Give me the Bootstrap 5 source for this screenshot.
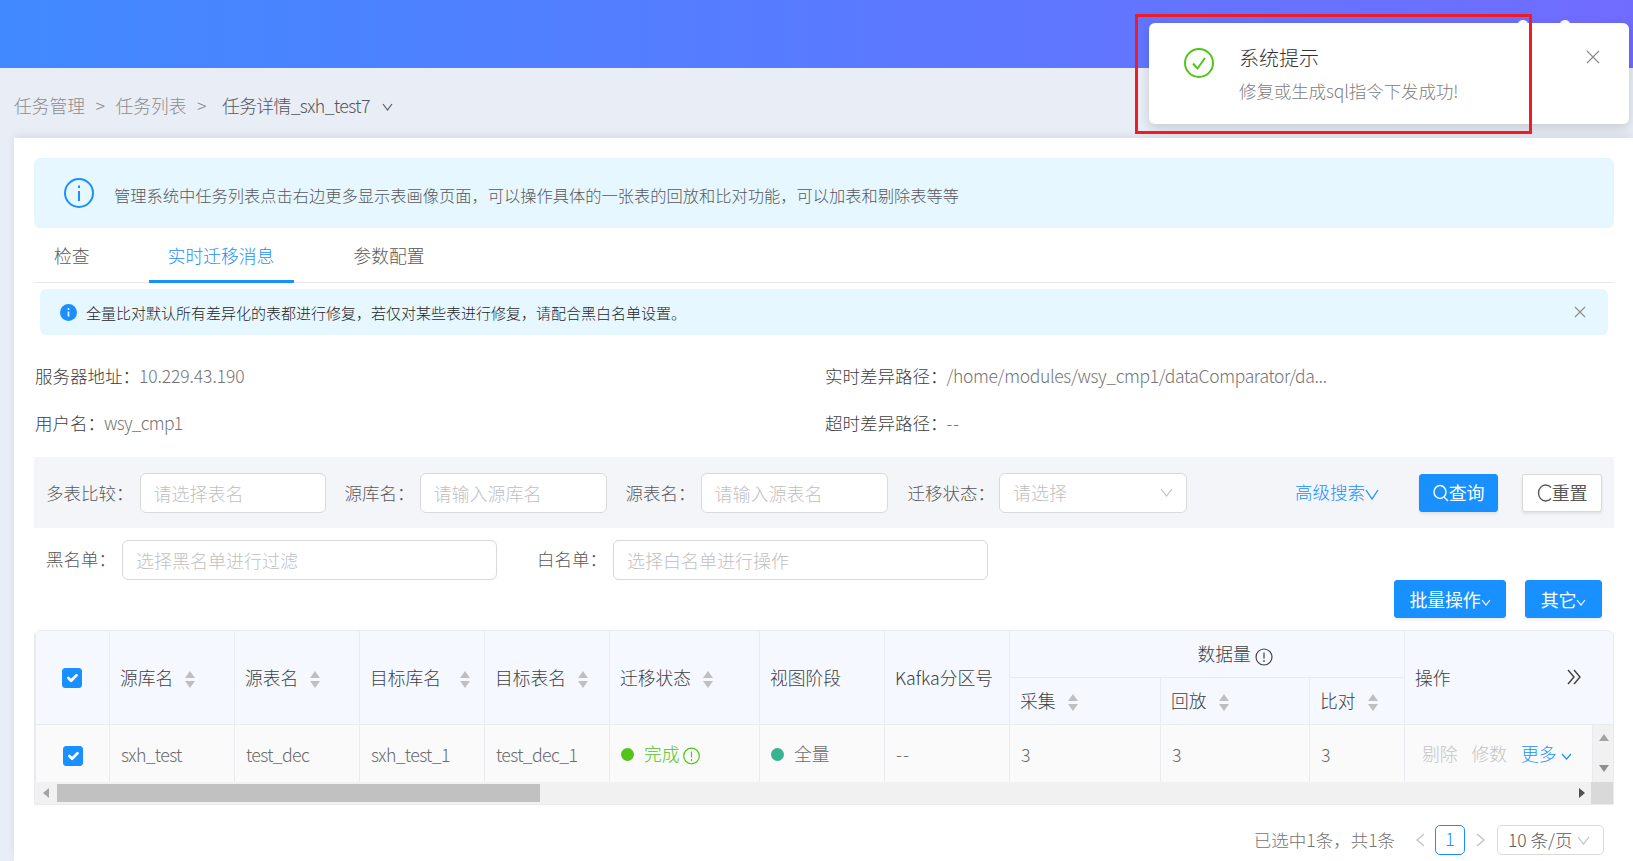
<!doctype html>
<html lang="zh-CN">
<head>
  <meta charset="utf-8">
  <meta name="viewport" content="width=device-width, initial-scale=1">
  <title>任务详情</title>
  <link href="https://cdn.jsdelivr.net/npm/bootstrap@5.3.0/dist/css/bootstrap.min.css" rel="stylesheet">
  <style>
    /* Page */
    body {
      background: #e9edf5;
      font-family: "Noto Sans CJK SC", "Liberation Sans", sans-serif;
      font-weight: 300;
      font-size: 17.5px;
      color: #595959;
      height: 861px;
      overflow: hidden;
      position: relative;
    }
    .top-bar {
      height: 68px;
      background: linear-gradient(90deg, #4189ff, #706cff);
    }
    .crumbs {
      height: 70px;
      padding: 25px 14px 0;
      line-height: 24px;
      font-size: 17.75px;
      color: #8c8c8c;
    }
    .crumbs .sep { margin: 0 10.5px; }
    .crumbs .here { color: #555; margin-left: 5px; letter-spacing: -.6px; }
    .crumb-chev { margin: 10px 0 0 12px; }
    /* Main card */
    .main-panel {
      margin-left: 14px;
      background: #fff;
      padding: 20px 19px 0 20px;
      height: 723px;
      box-shadow: 0 -3px 8px rgba(0, 0, 0, .07);
    }
    .tip-box {
      height: 70px;
      background: #e6f7ff;
      border-radius: 6px;
      padding: 0 30px;
      font-size: 16.25px;
      color: #595959;
    }
    .tip-box span { margin-top: 4px; margin-left: -2px; }
    .tab-row {
      height: 55px;
      border-bottom: 1px solid #e8e8e8;
      font-size: 17.75px;
    }
    .tab-item {
      height: 55px;
      line-height: 54px;
      color: #595959;
    }
    .tab-item.on {
      color: #1890ff;
      border-bottom: 3px solid #1890ff;
      width: 145px;
      text-align: center;
      margin-left: 59px;
    }
    .tab-first { margin-left: 20px; }
    .tab-last { margin-left: 60px; }
    .note-box {
      margin: 6px 6px 0 6px;
      height: 46px;
      background: #e6f7ff;
      border-radius: 6px;
      padding: 0 22px 0 20px;
      font-size: 15px;
      color: #262626;
    }
    .note-box .txt { margin-left: 9px; margin-top: 2px; }
    .info-grid { padding-top: 23px; height: 122px; }
    .info-line { height: 47px; line-height: 36px; }
    .info-l { width: 791px; padding-left: 1px; }
    .info-key { color: #404040; }
    .info-val { color: #737373; margin-left: -1px; }
    .val-path { letter-spacing: -.34px; }
    .val-user { letter-spacing: -.7px; }
    .val-ip { letter-spacing: -.1px; }
    .val-dash { letter-spacing: 1px; }
    /* Search */
    .search-bar {
      height: 71px;
      background: #f3f5f9;
      padding: 0 12px;
    }
    .search-bar .field-label { margin-top: 2px; }
    .filter-row .field-label { margin-top: -2px; }
    .field-label { color: #595959; white-space: nowrap; flex-shrink: 0; }
    .field-box {
      height: 40px;
      border: 1px solid #d9d9d9;
      border-radius: 6px;
      background: #fff;
      color: #bfbfbf;
      font-size: 18px;
      font-weight: 300;
      padding: 0 13px;
      box-shadow: none;
      flex-shrink: 0;
    }
    .field-box::placeholder { color: #bfbfbf; }
    .w-a { width: 186px; margin: 0 19px 0 6px; }
    .w-b { width: 187px; margin: 0 19px 0 5px; }
    .w-c { width: 187px; margin: 0 20px 0 5px; }
    .w-d { width: 188px; margin-left: 4px; }
    .w-e { width: 375px; margin: 0 40px 0 6px; }
    .w-f { width: 375px; margin-left: 6px; }
    .adv-link { color: #1890ff; margin-left: 108px; margin-right: 40px; text-decoration: none; white-space: nowrap; flex-shrink: 0; }
    .adv-link svg { vertical-align: -1px; }
    .act-btn {
      height: 38px;
      width: 79px;
      padding: 0;
      font-size: 18px;
      font-weight: 400;
      border-radius: 3px;
      white-space: nowrap;
      flex-shrink: 0;
      letter-spacing: -.2px;
      box-shadow: 0 2px 3px rgba(0, 0, 0, .08);
    }
    .act-btn svg { vertical-align: -2px; }
    .act-btn svg.chev { vertical-align: 1px; }
    .act-btn.btn-primary { background: #1890ff; border-color: #1890ff; }
    .act-btn.btn-light { background: #fff; border-color: #d9d9d9; color: #595959; margin-left: 24px; width: 80px; }
    .act-btn.wide-a { width: 112px; }
    .act-btn.wide-b { width: 77px; margin-left: 19px; }
    .filter-row { padding: 12px 12px 0; height: 52px; }
    .bulk-row { height: 50px; padding: 0 12px 0 0; }
    /* Table */
    .grid-wrap {
      border: 1px solid #e8ebf0;
      border-radius: 6px 6px 0 0;
      overflow: hidden;
      width: 1580px;
    }
    .grid {
      table-layout: fixed;
      width: 1579px;
      margin: 0;
      border-collapse: collapse;
      color: #595959;
    }
    .grid th, .grid td {
      border: 1px solid #e8ebf0;
      border-top: 0;
      padding: 0 0 0 10px;
      vertical-align: middle;
      font-weight: 300;
      white-space: nowrap;
      overflow: hidden;
    }
    .grid th { background: #f5f8ff; color: #404040; font-size: 17.75px; }
    .grid td { background: #fafafa; height: 58px; color: #6b6b6b; border-bottom: 0; padding-left: 11px; font-size: 17.75px; }
    .grid td.latin { letter-spacing: -.65px; padding-top: 2px; }
    .grid td.dash { letter-spacing: 1px; }
    .grid .top-h { height: 46px; text-align: center; padding-left: 56px; }
    .grid .sub-h { height: 47px; }
    .grid .chk { padding: 0; text-align: center; }
    .grid th.chk { padding: 0 1px 4px 0; }
    .grid .op {
      position: relative;
      box-shadow: -3px 0 6px rgba(0, 0, 0, .08);
      border-left: 0;
      clip-path: inset(0 0 0 -10px);
    }
    .grid td.op { padding-left: 17px; }
    .grid td.bar-v { padding: 0; background: #f1f1f1; border: 0; }
    .grid .form-check-input {
      width: 20px;
      height: 20px;
      margin: 0;
      float: none;
      background-color: #1890ff;
      border-color: #1890ff;
      border-radius: 3px;
      display: inline-block;
      vertical-align: middle;
    }
    .endgap { padding-right: 33px; }
    .sorter { display: inline-block; margin-left: 12px; vertical-align: -3px; }
    .sorter.far { margin-left: 19px; }
    .dot { display: inline-block; width: 13px; height: 13px; border-radius: 50%; margin-right: 10px; }
    .dot-green { background: #52c41a; }
    .dot-teal { background: #36b38f; }
    .done-txt { color: #52c41a; }
    .muted-op { color: #c4c4c4; margin-right: 14px; }
    .more-op { color: #1890ff; }
    .bar-h { height: 22px; background: #f1f1f1; }
    .bar-thumb { width: 484px; height: 18px; background: #c1c1c1; }
    .bar-left { width: 22px; }
    .bar-fill { width: 1034px; }
    .bar-right { width: 19px; }
    .bar-corner { width: 22px; height: 22px; background: #d9d9d9; }
    /* Pager */
    .pager-row { padding: 20px 10px 0 0; line-height: 30px; color: #737373; }
    .pager-num {
      width: 30px;
      height: 30px;
      border: 1px solid #1890ff;
      border-radius: 5px;
      color: #1890ff;
      text-align: center;
      line-height: 26px;
      margin: 0 11px 0 10px;
    }
    .pager-size {
      width: 107px;
      height: 30px;
      border: 1px solid #d9d9d9;
      border-radius: 5px;
      padding-left: 10px;
      margin-left: 11px;
      line-height: 28px;
      color: #595959;
    }
    /* Notification */
    .notice {
      position: absolute;
      left: 1149px;
      top: 23px;
      width: 480px;
      height: 101px;
      background: #fff;
      border: 0;
      border-radius: 6px;
      font-size: 17.5px;
      box-shadow: 0 4px 12px rgba(0, 0, 0, .15);
      z-index: 10;
    }
    .notice-title { position: absolute; left: 90px; top: 22px; color: #333; line-height: 26px; font-size: 20px; }
    .notice-text { position: absolute; left: 90px; top: 56px; font-size: 17.5px; color: #808080; line-height: 24px; letter-spacing: -.1px; }
    .notice-icon { position: absolute; left: 35px; top: 25px; }
    .notice-close { position: absolute; left: 437px; top: 27px; }
    .red-frame {
      position: absolute;
      left: 1135px;
      top: 14px;
      width: 397px;
      height: 120px;
      border: 3px solid #ef1c25;
      z-index: 11;
    }
    .hdr-bump {
      position: absolute;
      top: 20px;
      width: 10px;
      height: 8px;
      border-radius: 50%;
      background: #fff;
    }
    .bump-a { left: 1518px; }
    .bump-b { left: 1560px; }
  </style>
</head>
<body>
  <div class="top-bar"></div>
  <span class="hdr-bump bump-a"></span>
  <span class="hdr-bump bump-b"></span>

  <!-- Breadcrumb -->
  <div class="crumbs d-flex align-items-start">
    <span>任务管理</span>
    <span class="sep">&gt;</span>
    <span>任务列表</span>
    <span class="sep">&gt;</span>
    <span class="here">任务详情_sxh_test7</span>
    <svg class="crumb-chev" width="11" height="8" viewBox="0 0 11 8" fill="none" stroke="#595959" stroke-width="1.1"><path d="M1 1l4.500 6L10 1"/></svg>
  </div>

  <div class="main-panel">
    <div class="tip-box d-flex align-items-center">
      <svg width="30" height="30" viewBox="0 0 30 30" fill="none" stroke="#1890ff" stroke-width="2"><circle cx="15" cy="15" r="14"/><path d="M15 13v10M15 7.500v2.500"/></svg>
      <span class="ms-3 ps-1">管理系统中任务列表点击右边更多显示表画像页面，可以操作具体的一张表的回放和比对功能，可以加表和剔除表等等</span>
    </div>

    <div class="tab-row d-flex">
      <div class="tab-item tab-first">检查</div>
      <div class="tab-item on">实时迁移消息</div>
      <div class="tab-item tab-last">参数配置</div>
    </div>

    <div class="note-box d-flex align-items-center justify-content-between">
      <div class="d-flex align-items-center">
        <svg width="17" height="17" viewBox="0 0 17 17"><circle cx="8.500" cy="8.500" r="8.500" fill="#1890ff"/><path d="M8.500 7.500v5M8.500 4v2" stroke="#fff" stroke-width="1.600"/></svg>
        <span class="txt">全量比对默认所有差异化的表都进行修复，若仅对某些表进行修复，请配合黑白名单设置。</span>
      </div>
      <svg width="12" height="12" viewBox="0 0 12 12" fill="none" stroke="#8c8c8c" stroke-width="1.100"><path d="M1 1l10 10M11 1L1 11"/></svg>
    </div>

    <div class="info-grid">
      <div class="info-line d-flex">
        <div class="info-l"><span class="info-key">服务器地址：</span><span class="info-val val-ip">10.229.43.190</span></div>
        <div><span class="info-key">实时差异路径：</span><span class="info-val val-path">/home/modules/wsy_cmp1/dataComparator/da...</span></div>
      </div>
      <div class="info-line d-flex">
        <div class="info-l"><span class="info-key">用户名：</span><span class="info-val val-user">wsy_cmp1</span></div>
        <div><span class="info-key">超时差异路径：</span><span class="info-val val-dash">--</span></div>
      </div>
    </div>

    <!-- Search -->
    <div class="search-bar d-flex align-items-center">
      <span class="field-label">多表比较：</span>
      <input class="form-control field-box w-a" placeholder="请选择表名">
      <span class="field-label">源库名：</span>
      <input class="form-control field-box w-b" placeholder="请输入源库名">
      <span class="field-label">源表名：</span>
      <input class="form-control field-box w-c" placeholder="请输入源表名">
      <span class="field-label">迁移状态：</span>
      <div class="field-box w-d d-flex align-items-center justify-content-between">
        <span>请选择</span>
        <svg width="13" height="9" viewBox="0 0 13 9" fill="none" stroke="#bfbfbf" stroke-width="1.100"><path d="M1 1l5.500 7L12 1"/></svg>
      </div>
      <a class="adv-link" href="#">高级搜索<svg width="14" height="11" viewBox="0 0 14 11" fill="none" stroke="#1890ff" stroke-width="1.300"><path d="M1 1l6 9 6-9"/></svg></a>
      <button class="btn btn-primary act-btn" type="button"><svg width="16" height="18" viewBox="0 0 16 18" fill="none" stroke="#fff" stroke-width="1.400"><ellipse cx="7" cy="8" rx="6" ry="6.500"/><path d="M11 13l4 4"/></svg>查询</button>
      <button class="btn btn-light act-btn" type="button"><svg width="15" height="18" viewBox="0 0 15 18" fill="none" stroke="#595959" stroke-width="1.400"><path d="M14 3.500C12.800 2 10.800 1 8.500 1 4.600 1 1.500 4.600 1.500 9s3.100 8 7 8c2.300 0 4.300-1 5.500-2.500"/></svg>重置</button>
    </div>

    <div class="filter-row d-flex align-items-center">
      <span class="field-label">黑名单：</span>
      <input class="form-control field-box w-e" placeholder="选择黑名单进行过滤">
      <span class="field-label">白名单：</span>
      <input class="form-control field-box w-f" placeholder="选择白名单进行操作">
    </div>

    <div class="bulk-row d-flex justify-content-end">
      <button class="btn btn-primary act-btn wide-a" type="button">批量操作<svg class="chev" width="10" height="7" viewBox="0 0 10 7" fill="none" stroke="#fff" stroke-width="1.200"><path d="M1 1l4 5 4-5"/></svg></button>
      <button class="btn btn-primary act-btn wide-b" type="button">其它<svg class="chev" width="10" height="7" viewBox="0 0 10 7" fill="none" stroke="#fff" stroke-width="1.200"><path d="M1 1l4 5 4-5"/></svg></button>
    </div>

    <!-- Table -->
    <div class="grid-wrap">
      <table class="table grid">
        <colgroup>
          <col style="width:74px"><col style="width:125px"><col style="width:125px"><col style="width:125px"><col style="width:125px">
          <col style="width:150px"><col style="width:125px"><col style="width:125px"><col style="width:151px"><col style="width:149px">
          <col style="width:95px"><col style="width:188px"><col style="width:22px">
        </colgroup>
        <thead>
          <tr>
            <th rowspan="2" class="chk"><input class="form-check-input" type="checkbox" checked aria-label="全选"></th>
            <th rowspan="2">源库名<svg class="sorter" width="10" height="17" viewBox="0 0 10 17" fill="#bfbfbf"><path d="M5 0l5 7H0zM5 17l5-7H0z"/></svg></th>
            <th rowspan="2">源表名<svg class="sorter" width="10" height="17" viewBox="0 0 10 17" fill="#bfbfbf"><path d="M5 0l5 7H0zM5 17l5-7H0z"/></svg></th>
            <th rowspan="2">目标库名<svg class="sorter far" width="10" height="17" viewBox="0 0 10 17" fill="#bfbfbf"><path d="M5 0l5 7H0zM5 17l5-7H0z"/></svg></th>
            <th rowspan="2">目标表名<svg class="sorter" width="10" height="17" viewBox="0 0 10 17" fill="#bfbfbf"><path d="M5 0l5 7H0zM5 17l5-7H0z"/></svg></th>
            <th rowspan="2">迁移状态<svg class="sorter" width="10" height="17" viewBox="0 0 10 17" fill="#bfbfbf"><path d="M5 0l5 7H0zM5 17l5-7H0z"/></svg></th>
            <th rowspan="2">视图阶段</th>
            <th rowspan="2">Kafka分区号</th>
            <th colspan="3" class="top-h">数据量 <svg width="18" height="18" viewBox="0 0 18 18" fill="none" stroke="#404040" stroke-width="1.200" class="align-middle"><circle cx="9" cy="9" r="8"/><path d="M9 4.500v6M9 12v2"/></svg></th>
            <th rowspan="2" colspan="2" class="op">
              <div class="d-flex justify-content-between align-items-center endgap">
                <span>操作</span>
                <svg width="14" height="16" viewBox="0 0 14 16" fill="none" stroke="#404040" stroke-width="1.400"><path d="M1 1l6 7-6 7M7 1l6 7-6 7"/></svg>
              </div>
            </th>
          </tr>
          <tr>
            <th class="sub-h">采集<svg class="sorter" width="10" height="17" viewBox="0 0 10 17" fill="#bfbfbf"><path d="M5 0l5 7H0zM5 17l5-7H0z"/></svg></th>
            <th class="sub-h">回放<svg class="sorter" width="10" height="17" viewBox="0 0 10 17" fill="#bfbfbf"><path d="M5 0l5 7H0zM5 17l5-7H0z"/></svg></th>
            <th class="sub-h">比对<svg class="sorter" width="10" height="17" viewBox="0 0 10 17" fill="#bfbfbf"><path d="M5 0l5 7H0zM5 17l5-7H0z"/></svg></th>
          </tr>
        </thead>
        <tbody>
          <tr>
            <td class="chk"><input class="form-check-input" type="checkbox" checked aria-label="选择"></td>
            <td class="latin">sxh_test</td>
            <td class="latin">test_dec</td>
            <td class="latin">sxh_test_1</td>
            <td class="latin">test_dec_1</td>
            <td><span class="dot dot-green"></span><span class="done-txt">完成</span> <svg width="17" height="18" viewBox="0 0 17 18" fill="none" stroke="#52c41a" stroke-width="1.200" class="align-middle"><circle cx="8.500" cy="9" r="7.800"/><path d="M8.500 4.500v6M8.500 12v2"/></svg></td>
            <td><span class="dot dot-teal"></span>全量</td>
            <td class="dash">--</td>
            <td class="latin">3</td>
            <td class="latin">3</td>
            <td class="latin">3</td>
            <td class="op"><span class="muted-op">剔除</span><span class="muted-op">修数</span><span class="more-op">更多<svg width="11" height="7" viewBox="0 0 11 7" fill="none" stroke="#1890ff" stroke-width="1.200" class="ms-1"><path d="M1 1l4.500 5L10 1"/></svg></span></td>
            <td class="bar-v">
              <div class="d-flex flex-column align-items-center justify-content-between py-2">
                <svg width="10" height="7" viewBox="0 0 10 7" fill="#a3a3a3"><path d="M5 0l5 7H0z"/></svg>
                <svg class="mt-4" width="10" height="7" viewBox="0 0 10 7" fill="#8f8f8f"><path d="M5 7l5-7H0z"/></svg>
              </div>
            </td>
          </tr>
        </tbody>
      </table>
      <div class="bar-h d-flex align-items-center">
        <div class="bar-left d-flex justify-content-center"><svg width="6" height="10" viewBox="0 0 6 10" fill="#a3a3a3"><path d="M0 5l6-5v10z"/></svg></div>
        <div class="bar-thumb"></div>
        <div class="bar-fill"></div>
        <div class="bar-right d-flex justify-content-center"><svg width="6" height="10" viewBox="0 0 6 10" fill="#505050"><path d="M6 5L0 0v10z"/></svg></div>
        <div class="bar-corner"></div>
      </div>
    </div>

    <!-- Pager -->
    <div class="pager-row d-flex justify-content-end align-items-center">
      <span class="me-3">已选中1条，共1条</span>
      <svg class="ms-1" width="10" height="14" viewBox="0 0 10 14" fill="none" stroke="#bfbfbf" stroke-width="1.200"><path d="M9 1L2 7l7 6"/></svg>
      <div class="pager-num">1</div>
      <svg width="10" height="14" viewBox="0 0 10 14" fill="none" stroke="#bfbfbf" stroke-width="1.200"><path d="M1 1l7 6-7 6"/></svg>
      <div class="pager-size d-flex align-items-center"><span>10 条/页</span><svg class="ms-1" width="13" height="9" viewBox="0 0 13 9" fill="none" stroke="#bfbfbf" stroke-width="1.100"><path d="M1 1l5.500 7L12 1"/></svg></div>
    </div>
  </div>

  <!-- Notification -->
  <div class="toast show notice" role="alert">
    <svg class="notice-icon" width="30" height="30" viewBox="0 0 30 30" fill="none" stroke="#52c41a" stroke-width="2"><circle cx="15" cy="15" r="14"/><path d="M9 15.500l4.500 5L21 10"/></svg>
    <div class="notice-title">系统提示</div>
    <div class="notice-text">修复或生成sql指令下发成功!</div>
    <svg class="notice-close" width="14" height="14" viewBox="0 0 14 14" fill="none" stroke="#8c8c8c" stroke-width="1.200"><path d="M1 1l12 12M13 1L1 13"/></svg>
  </div>
  <div class="red-frame"></div>

  <script src="https://cdn.jsdelivr.net/npm/bootstrap@5.3.0/dist/js/bootstrap.bundle.min.js"></script>
</body>
</html>
